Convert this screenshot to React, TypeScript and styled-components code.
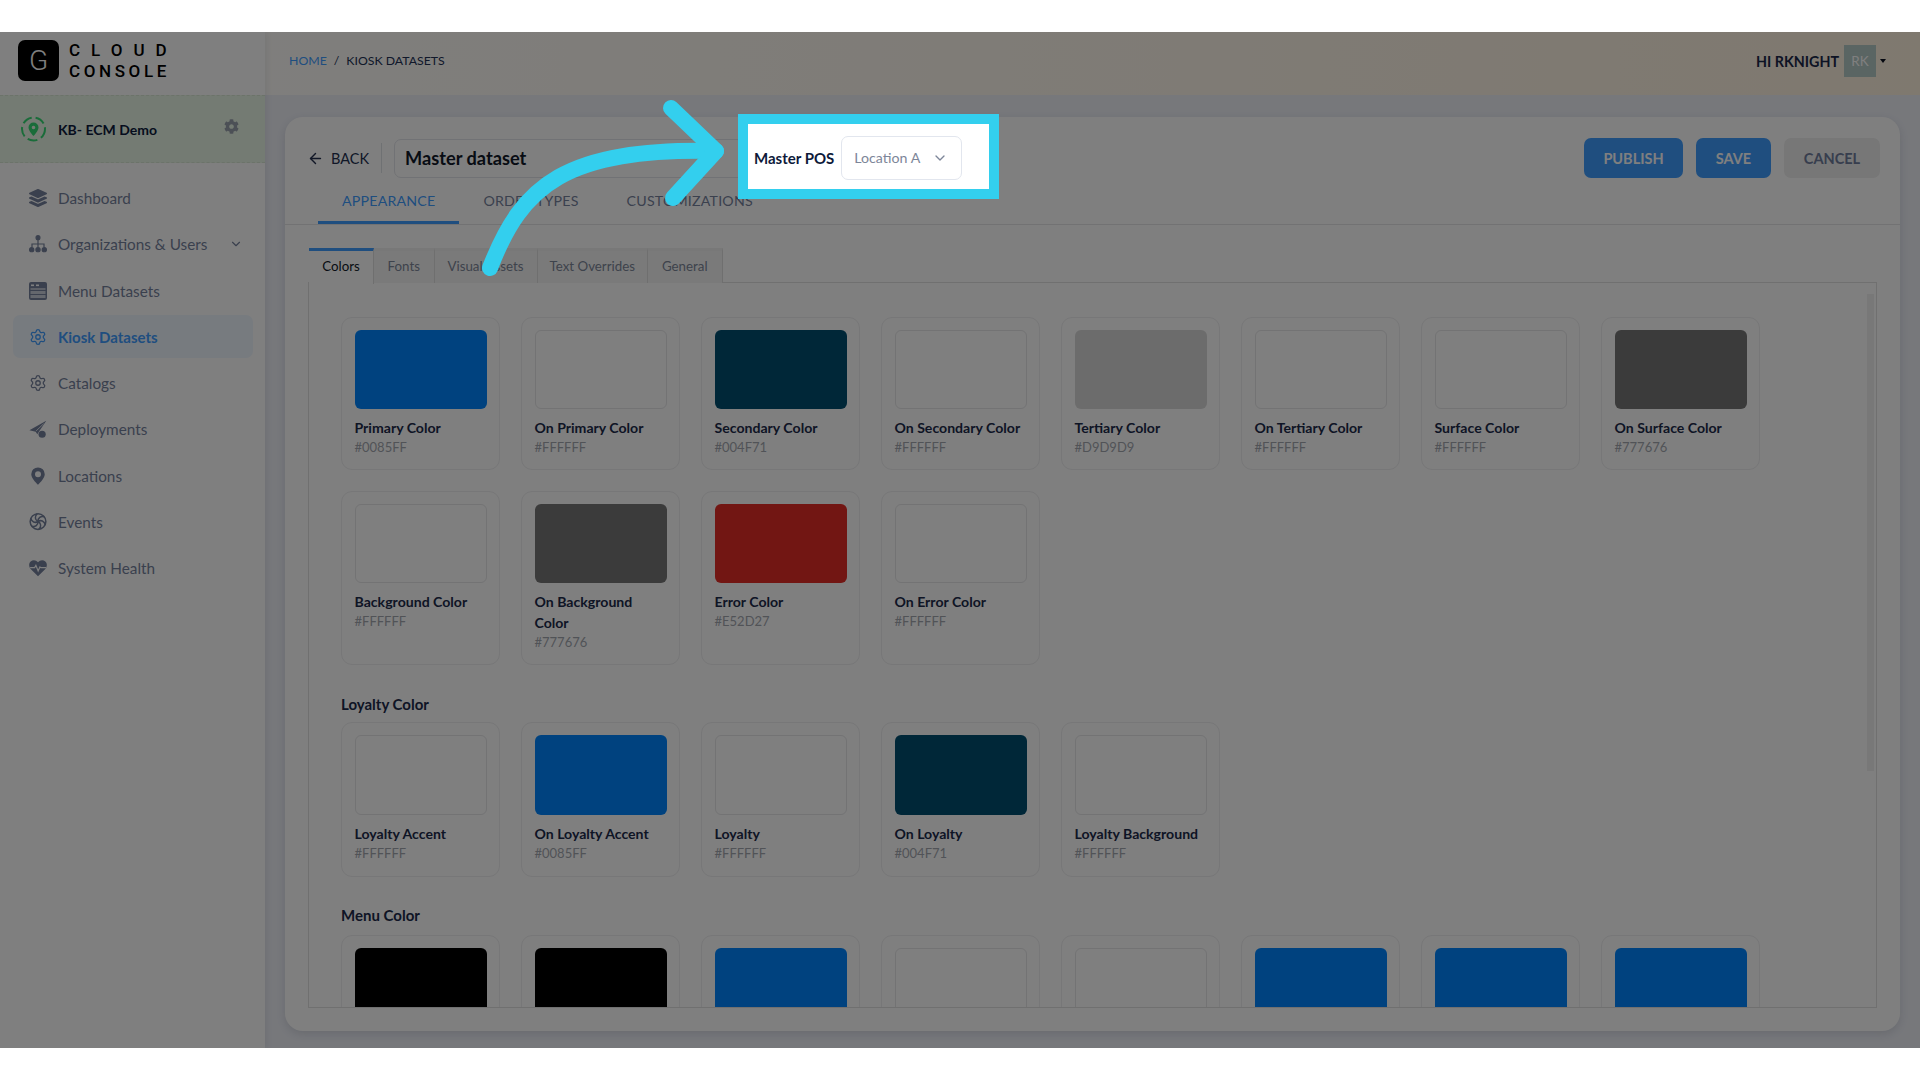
import React from "react";
import styled, { createGlobalStyle } from "styled-components";
import { ArrowLeft, ChevronDown, Settings } from "lucide-react";
import { FaLayerGroup, FaCog } from "react-icons/fa";

const Global = createGlobalStyle`
  * { box-sizing: border-box; }
  html, body { margin: 0; background: #fff; }
  body { font-family: "Lato", "Liberation Sans", sans-serif; width: 1920px; height: 1080px; overflow: hidden; }
`;

const Frame = styled.div`
  position: relative; margin-top: 32px; width: 1920px; height: 1016px;
  display: flex; overflow: hidden; background: #eef0f7;
`;
const Sidebar = styled.aside`
  width: 265px; flex: none; background: #fff; display: flex; flex-direction: column;
  box-shadow: 2px 0 6px rgba(30, 40, 70, .08); z-index: 1;
`;
const LogoBlock = styled.div`
  height: 63px; padding: 8px 0 0 18px; display: flex; align-items: flex-start; gap: 10px;
`;
const LogoMark = styled.div`
  width: 41px; height: 41px; border-radius: 7px; background: #000; color: #fff;
  display: flex; align-items: center; justify-content: center;
  font: 300 28px "Roboto", sans-serif;
`;
const LogoText = styled.div`
  display: flex; flex-direction: column; gap: 3px; padding-top: 1px;
  color: #000; font: 500 17px/18px "Roboto", sans-serif;
`;
const LogoLine = styled.span<{ $spacing: number }>`
  letter-spacing: ${(p) => p.$spacing}px; white-space: nowrap;
`;
const OrgBlock = styled.div`
  height: 68px; padding: 0 26px 0 21px; display: flex; align-items: center; gap: 12px;
  background: #e9f6e6; border-top: 1px dashed #d8e6d4; border-bottom: 1px dashed #d8e6d4;
`;
const OrgName = styled.span`
  flex: 1; font-size: 14px; font-weight: 700; color: #0c1a3c;
`;
const OrgGear = styled.span`
  display: flex; color: #98a0ac; margin-top: -6px;
`;
const Nav = styled.nav`
  padding: 13.5px 12px 0 13px; display: flex; flex-direction: column; gap: 3.25px;
`;
const NavItem = styled.a<{ $active?: boolean }>`
  height: 43px; padding: 0 10px 0 16px; border-radius: 7px; display: flex; align-items: center; gap: 11px;
  font-size: ${(p) => (p.$active ? 15 : 15.3)}px; color: ${(p) => (p.$active ? "#3e9cff" : "#75819c")};
  background: ${(p) => (p.$active ? "#eff6ff" : "transparent")};
  font-weight: ${(p) => (p.$active ? 700 : 400)};
`;
const NavIcon = styled.span`
  width: 18px; height: 20px; flex: none; display: flex; align-items: center; justify-content: center;
`;
const NavLabel = styled.span`
  flex: 1; white-space: nowrap;
`;

const Main = styled.main`
  flex: 1; min-width: 0; display: flex; flex-direction: column;
`;
const TopBar = styled.header`
  height: 63px; flex: none; padding: 0 34px 5px 24px; display: flex; align-items: center;
  background: linear-gradient(90deg, #fffdfa, #fff2df);
`;
const Crumbs = styled.div`
  display: flex; align-items: center; gap: 7px; font-size: 12.3px; color: #223155; font-weight: 400; flex: 1;
  margin-bottom: 2px;
`;
const CrumbLink = styled.span`
  color: #3e9cff;
`;
const UserName = styled.span`
  font-size: 14.3px; font-weight: 700; color: #1a2748; margin-right: 5px;
`;
const Avatar = styled.div`
  width: 32px; height: 32px; background: #b4cac6; color: #fff; font-size: 13.5px;
  display: flex; align-items: center; justify-content: center;
`;
const Caret = styled.span`
  margin-left: 4px; width: 0; height: 0; border: 3.5px solid transparent; border-top: 4px solid #0b1020; border-bottom: 0;
`;
const Card = styled.section`
  flex: 1; min-height: 0; margin: 22px 20px 17px; background: #fff; border-radius: 18px;
  display: flex; flex-direction: column; box-shadow: 0 3px 8px rgba(40, 50, 80, .14);
`;
const CardHead = styled.div`
  flex: none; padding: 21px 20px 0 22px; display: flex; align-items: center; height: 61px;
`;
const Back = styled.button`
  border: 0; background: none; padding: 0; display: flex; align-items: center; gap: 7px;
  font: 400 14.5px "Lato", sans-serif; color: #24304f;
`;
const Rule = styled.span`
  width: 1px; height: 30px; background: #dfe2e7; margin: 0 12px;
`;
const TitleInput = styled.div`
  width: 350px; height: 39px; border: 1px solid #e2e4ea; border-radius: 7px; padding-left: 10px;
  display: flex; align-items: center; font-size: 18.2px; font-weight: 700; color: #101828;
`;
const Actions = styled.div`
  margin-left: auto; display: flex; gap: 13px;
`;
const ActionButton = styled.button<{ $primary?: boolean; $w: number }>`
  width: ${(p) => p.$w}px; height: 40px; border: 0; border-radius: 7px;
  font: 700 14.5px "Lato", sans-serif;
  background: ${(p) => (p.$primary ? "#3e9cff" : "#eeeeee")};
  color: ${(p) => (p.$primary ? "#fff" : "#6f7c9c")};
`;
const Tabs = styled.div`
  flex: none; height: 47px; padding-left: 33px; display: flex; border-bottom: 1px solid #e4e4e6;
`;
const Tab = styled.div<{ $active?: boolean }>`
  height: 46px; padding: 2px 24px 0; display: flex; align-items: center; font-size: 14.2px; letter-spacing: .2px;
  color: ${(p) => (p.$active ? "#3e9cff" : "#76829c")};
  border-bottom: 3px solid ${(p) => (p.$active ? "#3e9cff" : "transparent")};
`;
const CardBody = styled.div`
  flex: 1; min-height: 0; padding: 23px; display: flex; flex-direction: column;
`;
const SubTabs = styled.div`
  flex: none; height: 35px; display: flex; border-bottom: 1px solid #e0e0e0; padding-left: 1px;
`;
const SubTab = styled.div<{ $active?: boolean; $w: number }>`
  width: ${(p) => p.$w}px; height: 35px; padding-bottom: 3px; display: flex; align-items: center; justify-content: center; font-size: 13.3px;
  color: ${(p) => (p.$active ? "#101828" : "#7c8698")};
  background: ${(p) => (p.$active ? "#fff" : "#f5f5f5")};
  border-right: 1px solid #dedede;
  border-top: 3px solid ${(p) => (p.$active ? "#3e9cff" : "#f0f0f0")};
  ${(p) => (p.$active ? "height: 36px; margin-bottom: -1px;" : "")}
`;
const Panel = styled.div`
  position: relative; flex: 1; min-height: 0; overflow: hidden;
  border: 1px solid #e0e0e0; border-top: 0; padding: 34px 31px 0 32px;
`;
const ScrollThumb = styled.div`
  position: absolute; right: 2px; top: 11px; width: 7px; height: 477px; background: #f0f0f1;
`;
const SwatchGrid = styled.div`
  display: grid; grid-template-columns: repeat(8, 159px); column-gap: 21px; row-gap: 21px;
`;
const SwatchCard = styled.div<{ $tall?: boolean }>`
  border: 1px solid #eeeef0; border-radius: 11px;
  padding: 12px 12px ${(p) => (p.$tall ? 14 : 13)}px 12.5px;
`;
const Swatch = styled.div<{ $color: string; $tall?: boolean }>`
  height: ${(p) => (p.$tall ? 80 : 79)}px; border-radius: 6px; margin-bottom: 8px; background: ${(p) => p.$color};
  border: ${(p) => (p.$color.toUpperCase() === "#FFFFFF" ? "1px solid #e6e6e8" : "0")};
`;
const SwatchName = styled.div`
  font-size: 14.1px; font-weight: 700; line-height: 21px; color: #1c2a4a;
`;
const SwatchHex = styled.div`
  font-size: 13px; line-height: 18px; color: #a3a7af;
`;
const GroupTitle = styled.h3<{ $after: number }>`
  margin: 27.5px 0 ${(p) => p.$after}px; font-size: 15px; line-height: 22px; font-weight: 700; color: #1c2a4a;
`;

const Overlay = styled.div`
  position: absolute; inset: 0; background: rgba(0, 0, 0, .5); z-index: 5;
`;
const Highlight = styled.div`
  position: absolute; z-index: 6; left: 738px; top: 82px; width: 261px; height: 85px;
  border: 10px solid #33cfee; background: #fff; display: flex; align-items: center; padding: 3px 0 0 6px; gap: 7px;
`;
const PosLabel = styled.span`
  font-size: 15px; font-weight: 700; color: #0e1a3a; white-space: nowrap;
`;
const PosSelect = styled.div`
  width: 121px; height: 44px; border: 1px solid #e2e6ee; border-radius: 7px; padding: 0 13px 1px 12px;
  display: flex; align-items: center; justify-content: space-between; font-size: 14.2px; color: #7d8699;
`;
const ArrowSvg = styled.svg`
  position: absolute; inset: 0; z-index: 7;
`;

type C = [string, string];
const row1: C[] = [
  ["Primary Color", "#0085FF"], ["On Primary Color", "#FFFFFF"], ["Secondary Color", "#004F71"],
  ["On Secondary Color", "#FFFFFF"], ["Tertiary Color", "#D9D9D9"], ["On Tertiary Color", "#FFFFFF"],
  ["Surface Color", "#FFFFFF"], ["On Surface Color", "#777676"],
  ["Background Color", "#FFFFFF"], ["On Background Color", "#777676"], ["Error Color", "#E52D27"], ["On Error Color", "#FFFFFF"],
];
const loyalty: C[] = [
  ["Loyalty Accent", "#FFFFFF"], ["On Loyalty Accent", "#0085FF"], ["Loyalty", "#FFFFFF"],
  ["On Loyalty", "#004F71"], ["Loyalty Background", "#FFFFFF"],
];
const menu: string[] = ["#000000", "#000000", "#0085FF", "#FFFFFF", "#FFFFFF", "#0085FF", "#0085FF", "#0085FF"];

const Grid = ({ items, tall }: { items: C[]; tall?: boolean }) => (
  <SwatchGrid>
    {items.map(([n, c]) => (
      <SwatchCard key={n} $tall={tall}>
        <Swatch $color={c} $tall={tall} />
        <SwatchName>{n}</SwatchName>
        <SwatchHex>{c}</SwatchHex>
      </SwatchCard>
    ))}
  </SwatchGrid>
);

const ink = "#75819c";
const SitemapIcon = () => (
  <svg width="19" height="18" viewBox="0 0 24 24" fill={ink} stroke={ink} strokeWidth="1.6">
    <circle cx="12" cy="3.5" r="2.6" />
    <path d="M12 5v11M4 16v-4h16v4" fill="none" />
    <circle cx="3.6" cy="19.5" r="2.8" /><circle cx="12" cy="19.5" r="2.8" /><circle cx="20.4" cy="19.5" r="2.8" />
  </svg>
);
const MenuIcon = () => (
  <svg width="18" height="18" viewBox="0 0 18 18">
    <rect x="0" y="0" width="18" height="18" rx="2" fill={ink} />
    <rect x="2" y="2.500" width="3" height="1.600" fill="#fff" /><rect x="7" y="2.500" width="3" height="1.600" fill="#fff" />
    <rect x="1.500" y="6.500" width="15" height="1" fill="#fff" />
    <rect x="1.500" y="9" width="15" height="3" fill="#c9cfdb" />
    <rect x="1.500" y="13" width="15" height="3" fill="#c9cfdb" />
  </svg>
);
const PlaneIcon = () => (
  <svg width="20" height="20" viewBox="0 0 24 24" fill={ink}>
    <path d="M23 1 L0.5 13.5 L9 15.5 L11 19 L14.5 13.5 Z" />
    <path d="M19.5 5 L9.5 14.5" stroke="#fff" strokeWidth="1" fill="none" />
    <circle cx="17.5" cy="19" r="4.8" />
  </svg>
);
const PinIcon = () => (
  <svg width="20" height="20" viewBox="0 0 24 24" fill={ink}>
    <path fillRule="evenodd" d="M12 .5a9 9 0 0 0-9 9c0 6 9 14 9 14s9-8 9-14a9 9 0 0 0-9-9zm0 13a4 4 0 1 1 0-8 4 4 0 0 1 0 8z" />
  </svg>
);
const EventsIcon = () => (
  <svg width="19" height="19" viewBox="0 0 24 24" fill="none" stroke={ink} strokeWidth="2">
    <circle cx="12" cy="12" r="10.500" />
    {[0, 60, 120, 180, 240, 300].map((a) => (
      <path key={a} d="M12 12 C8 10 7 5 11 1.500" transform={`rotate(${a} 12 12)`} />
    ))}
  </svg>
);
const HeartIcon = () => (
  <svg width="19" height="18" viewBox="0 0 24 23">
    <path fill={ink} d="M12 22.500 2.500 13C-.5 10-.5 5.300 2.200 2.800 5 .2 9.400.5 12 3.800 14.600.5 19 .2 21.800 2.800c2.700 2.500 2.700 7.200-.3 10.200z" />
    <path d="M1.500 11h6l1.700-3 3 7.500 2.400-5.500 1.200 1h7" fill="none" stroke="#fff" strokeWidth="1.600" />
  </svg>
);
const OrgIcon = () => (
  <svg width="25" height="26" viewBox="0 0 25 26" fill="none">
    <circle cx="12.500" cy="13" r="11.500" stroke="#35d974" strokeWidth="2" strokeDasharray="10 4" />
    <path fill="#35d974" fillRule="evenodd" d="M12.500 6.500a5 5 0 0 0-5 5c0 3.500 5 8.500 5 8.500s5-5 5-8.500a5 5 0 0 0-5-5zm0 6.800a1.800 1.800 0 1 1 0-3.600 1.800 1.800 0 0 1 0 3.600z" />
  </svg>
);

const navItems: { label: string; icon: React.ReactNode; active?: boolean; more?: boolean }[] = [
  { label: "Dashboard", icon: <FaLayerGroup size={18} /> },
  { label: "Organizations & Users", icon: <SitemapIcon />, more: true },
  { label: "Menu Datasets", icon: <MenuIcon /> },
  { label: "Kiosk Datasets", icon: <Settings size={22} strokeWidth={1.7} />, active: true },
  { label: "Catalogs", icon: <Settings size={22} strokeWidth={1.7} /> },
  { label: "Deployments", icon: <PlaneIcon /> },
  { label: "Locations", icon: <PinIcon /> },
  { label: "Events", icon: <EventsIcon /> },
  { label: "System Health", icon: <HeartIcon /> },
];

const subTabs: [string, number][] = [["Colors", 65], ["Fonts", 60.5], ["Visual Assets", 103], ["Text Overrides", 110.5], ["General", 74.5]];

export default function App() {
  return (
    <>
      <Global />
      <Frame>
        <Sidebar>
          <LogoBlock>
            <LogoMark>G</LogoMark>
            <LogoText>
              <LogoLine $spacing={11}>CLOUD</LogoLine>
              <LogoLine $spacing={3.6}>CONSOLE</LogoLine>
            </LogoText>
          </LogoBlock>
          <OrgBlock>
            <OrgIcon />
            <OrgName>KB- ECM Demo</OrgName>
            <OrgGear><FaCog size={15} /></OrgGear>
          </OrgBlock>
          <Nav>
            {navItems.map((n) => (
              <NavItem key={n.label} $active={n.active}>
                <NavIcon>{n.icon}</NavIcon>
                <NavLabel>{n.label}</NavLabel>
                {n.more && <ChevronDown size={14} />}
              </NavItem>
            ))}
          </Nav>
        </Sidebar>
        <Main>
          <TopBar>
            <Crumbs>
              <CrumbLink>HOME</CrumbLink><span>/</span><span>KIOSK DATASETS</span>
            </Crumbs>
            <UserName>HI RKNIGHT</UserName>
            <Avatar>RK</Avatar>
            <Caret />
          </TopBar>
          <Card>
            <CardHead>
              <Back><ArrowLeft size={17} />BACK</Back>
              <Rule />
              <TitleInput>Master dataset</TitleInput>
              <Actions>
                <ActionButton $primary $w={99}>PUBLISH</ActionButton>
                <ActionButton $primary $w={75}>SAVE</ActionButton>
                <ActionButton $w={96}>CANCEL</ActionButton>
              </Actions>
            </CardHead>
            <Tabs>
              <Tab $active>APPEARANCE</Tab>
              <Tab>ORDER TYPES</Tab>
              <Tab>CUSTOMIZATIONS</Tab>
            </Tabs>
            <CardBody>
              <SubTabs>
                {subTabs.map(([t, w], i) => (
                  <SubTab key={t} $w={w} $active={i === 0}>{t}</SubTab>
                ))}
              </SubTabs>
              <Panel>
                <ScrollThumb />
                <Grid items={row1} />
                <GroupTitle $after={7}>Loyalty Color</GroupTitle>
                <Grid items={loyalty} tall />
                <GroupTitle $after={9}>Menu Color</GroupTitle>
                <SwatchGrid>
                  {menu.map((c, i) => (
                    <SwatchCard key={i}><Swatch $color={c} /></SwatchCard>
                  ))}
                </SwatchGrid>
              </Panel>
            </CardBody>
          </Card>
        </Main>
        <Overlay />
        <Highlight>
          <PosLabel>Master POS</PosLabel>
          <PosSelect>Location A<ChevronDown size={16} /></PosSelect>
        </Highlight>
        <ArrowSvg width="1920" height="1016" viewBox="0 32 1920 1016" fill="none" stroke="#33cfee" strokeWidth="16" strokeLinecap="round" strokeLinejoin="round">
          <path d="M490 268C522 185 565 148 716 151" />
          <path d="M671 108L716 151L673 198" />
        </ArrowSvg>
      </Frame>
    </>
  );
}
